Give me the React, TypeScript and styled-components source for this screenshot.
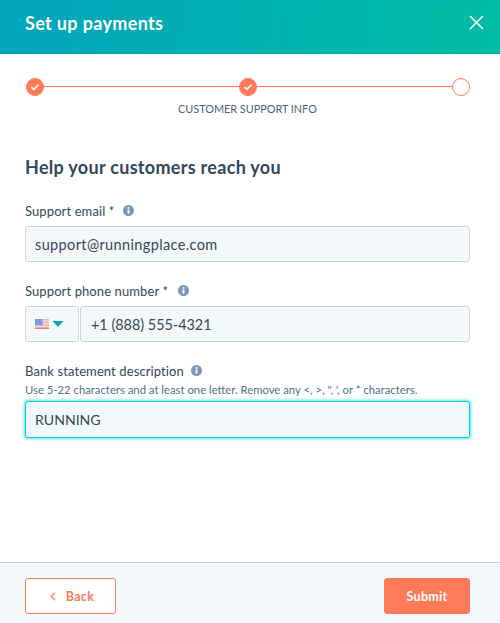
import React from "react";
import styled, { createGlobalStyle } from "styled-components";

const Global = createGlobalStyle`
  html, body { margin: 0; padding: 0; background: #fff; }
  body { font-family: "Lato", "Liberation Sans", sans-serif; color: #33475b; }
  * { box-sizing: border-box; }
`;

const Page = styled.div`
  width: 500px;
  height: 623px;
  display: flex;
  flex-direction: column;
  overflow: hidden;
`;

const Header = styled.header`
  height: 54px;
  flex: none;
  display: flex;
  align-items: center;
  justify-content: space-between;
  padding: 0 16px 9px 25px;
  background: linear-gradient(95deg, #00a4bd 0%, #00bda5 100%);
`;

const Title = styled.h1`
  margin: 0;
  color: #fff;
  font-size: 18px;
  font-weight: 700;
  letter-spacing: 0.35px;
`;

const CloseButton = styled.button`
  width: 15px;
  height: 15px;
  padding: 0;
  border: 0;
  background: none;
  display: flex;
`;

const Main = styled.main`
  flex: 1;
  display: flex;
  flex-direction: column;
  padding: 23px 30px 0 25px;
`;

const Stepper = styled.div`
  display: flex;
  align-items: center;
  height: 19px;
  margin: 0 0 0 1px;
  width: 444px;
`;

const StepDot = styled.span<{ $done?: boolean }>`
  flex: none;
  width: 18px;
  height: 18px;
  border-radius: 50%;
  border: 1px solid #ff7a59;
  background: ${(p) => (p.$done ? "#ff7a59" : "#fff")};
  display: flex;
  align-items: center;
  justify-content: center;
`;

const StepLine = styled.span`
  flex: 1;
  height: 1.5px;
  background: #ff7a59;
`;

const StepLabel = styled.div`
  margin-top: 6px;
  text-align: center;
  font-size: 10.85px;
  line-height: 14px;
  color: #4d6079;
`;

const Heading = styled.h2`
  margin: 39px 0 0;
  font-size: 18px;
  line-height: 24px;
  font-weight: 700;
  color: #33475b;
  letter-spacing: 0.3px;
`;

const Field = styled.div<{ $top: number }>`
  margin-top: ${(p) => p.$top}px;
`;

const LabelRow = styled.div`
  display: flex;
  align-items: center;
  height: 16px;
  font-size: 13px;
  color: #33475b;
  letter-spacing: 0.1px;
`;

const InfoIcon = styled.svg<{ $gap: number }>`
  width: 11px;
  height: 11px;
  margin-left: ${(p) => p.$gap}px;
  margin-bottom: 2px;
  flex: none;
`;

const Help = styled.div`
  margin-top: 4px;
  font-size: 11.3px;
  line-height: 14px;
  color: #516f90;
  white-space: nowrap;
`;

const Input = styled.div<{ $focus?: boolean }>`
  margin-top: ${(p) => (p.$focus ? "4px" : "7px")};
  flex: 1;
  height: ${(p) => (p.$focus ? "37px" : "36px")};
  display: flex;
  align-items: center;
  padding: 0 9px;
  font-size: ${(p) => (p.$focus ? "14.1px" : "14.5px")};
  letter-spacing: ${(p) => (p.$focus ? "0" : "0.37px")};
  color: #33475b;
  background: #f5f8fa;
  border: 1px solid ${(p) => (p.$focus ? "#00d0e4" : "#cbd6e2")};
  border-radius: 3px;
  box-shadow: ${(p) => (p.$focus ? "0 0 3px 1px rgba(0, 208, 228, 0.65)" : "none")};
`;

const PhoneRow = styled.div`
  display: flex;
  gap: 1px;
  margin-top: 7px;
`;

const FlagButton = styled.div`
  flex: none;
  width: 54px;
  height: 36px;
  display: flex;
  align-items: center;
  gap: 3px;
  padding-left: 9px;
  background: #f5f8fa;
  border: 1px solid #cbd6e2;
  border-radius: 3px;
`;

const PhoneInput = styled.div`
  flex: 1;
  height: 36px;
  display: flex;
  align-items: center;
  padding: 0 10px;
  font-size: 14.4px;
  color: #33475b;
  background: #f5f8fa;
  border: 1px solid #cbd6e2;
  border-radius: 3px;
`;

const Footer = styled.footer`
  flex: none;
  height: 61px;
  display: flex;
  align-items: flex-start;
  justify-content: space-between;
  padding: 15px 30px 0 25px;
  background: #f5f8fa;
  border-top: 1px solid #cbd6e2;
`;

const BackButton = styled.button`
  width: 91px;
  height: 36px;
  display: flex;
  align-items: center;
  justify-content: center;
  gap: 10px;
  padding: 0 0 0 3px;
  background: #fff;
  border: 1px solid #ff7a59;
  border-radius: 3px;
  color: #ff7a59;
  font: 700 12.5px "Lato", "Liberation Sans", sans-serif;
  letter-spacing: 0.3px;
`;

const SubmitButton = styled.button`
  width: 86px;
  height: 36px;
  padding: 0;
  background: #ff7a59;
  border: 1px solid #ff7a59;
  border-radius: 3px;
  color: #fff;
  font: 700 12.5px "Lato", "Liberation Sans", sans-serif;
  letter-spacing: 0.3px;
`;

const Check = () => (
  <svg width="10" height="8" viewBox="0 0 10 8" fill="none">
    <path d="M1.4 4.2 3.8 6.4 8.6 1.6" stroke="#fff" strokeWidth="1.7" />
  </svg>
);

const Info = ({ gap }: { gap: number }) => (
  <InfoIcon $gap={gap} viewBox="0 0 11 11">
    <circle cx="5.5" cy="5.5" r="5.5" fill="#7c98b6" />
    <rect x="4.6" y="4.6" width="1.8" height="4" fill="#fff" />
    <rect x="4.6" y="2.1" width="1.8" height="1.6" fill="#fff" />
  </InfoIcon>
);

const Flag = () => (
  <svg width="14" height="10" viewBox="0 0 14 10">
    <rect width="14" height="10" fill="#f3b4ae" />
    <rect y="1.4" width="14" height="1.4" fill="#f6dcd8" />
    <rect y="4.2" width="14" height="1.4" fill="#f6dcd8" />
    <rect y="7" width="14" height="1.4" fill="#f6dcd8" />
    <rect y="8.6" width="14" height="1.4" fill="#e0847a" />
    <rect width="7.5" height="6" fill="#7f9be6" />
  </svg>
);

const Caret = () => (
  <svg width="12" height="6" viewBox="0 0 12 6">
    <path d="M0.5 0H11.5L6 6Z" fill="#00a4bd" />
  </svg>
);

export default function App() {
  return (
    <Page>
      <Global />
      <Header>
        <Title>Set up payments</Title>
        <CloseButton aria-label="Close">
          <svg width="15" height="15" viewBox="0 0 15 15" fill="none">
            <path d="M1 1 14 14M14 1 1 14" stroke="#fff" strokeWidth="1.6" />
          </svg>
        </CloseButton>
      </Header>
      <Main>
        <Stepper>
          <StepDot $done><Check /></StepDot>
          <StepLine />
          <StepDot $done><Check /></StepDot>
          <StepLine />
          <StepDot />
        </Stepper>
        <StepLabel>CUSTOMER SUPPORT INFO</StepLabel>
        <Heading>Help your customers reach you</Heading>
        <Field $top={24}>
          <LabelRow>Support email *<Info gap={9} /></LabelRow>
          <Input>support@runningplace.com</Input>
        </Field>
        <Field $top={21}>
          <LabelRow>Support phone number *<Info gap={10} /></LabelRow>
          <PhoneRow>
            <FlagButton><Flag /><Caret /></FlagButton>
            <PhoneInput>+1 (888) 555-4321</PhoneInput>
          </PhoneRow>
        </Field>
        <Field $top={21}>
          <LabelRow>Bank statement description<Info gap={7} /></LabelRow>
          <Help>Use 5-22 characters and at least one letter. Remove any &lt;, &gt;, ", ', or * characters.</Help>
          <Input $focus>RUNNING</Input>
        </Field>
      </Main>
      <Footer>
        <BackButton>
          <svg width="6" height="9" viewBox="0 0 6 9" fill="none">
            <path d="M5 .8 1.2 4.5 5 8.2" stroke="#ff7a59" strokeWidth="1.2" />
          </svg>
          Back
        </BackButton>
        <SubmitButton>Submit</SubmitButton>
      </Footer>
    </Page>
  );
}
